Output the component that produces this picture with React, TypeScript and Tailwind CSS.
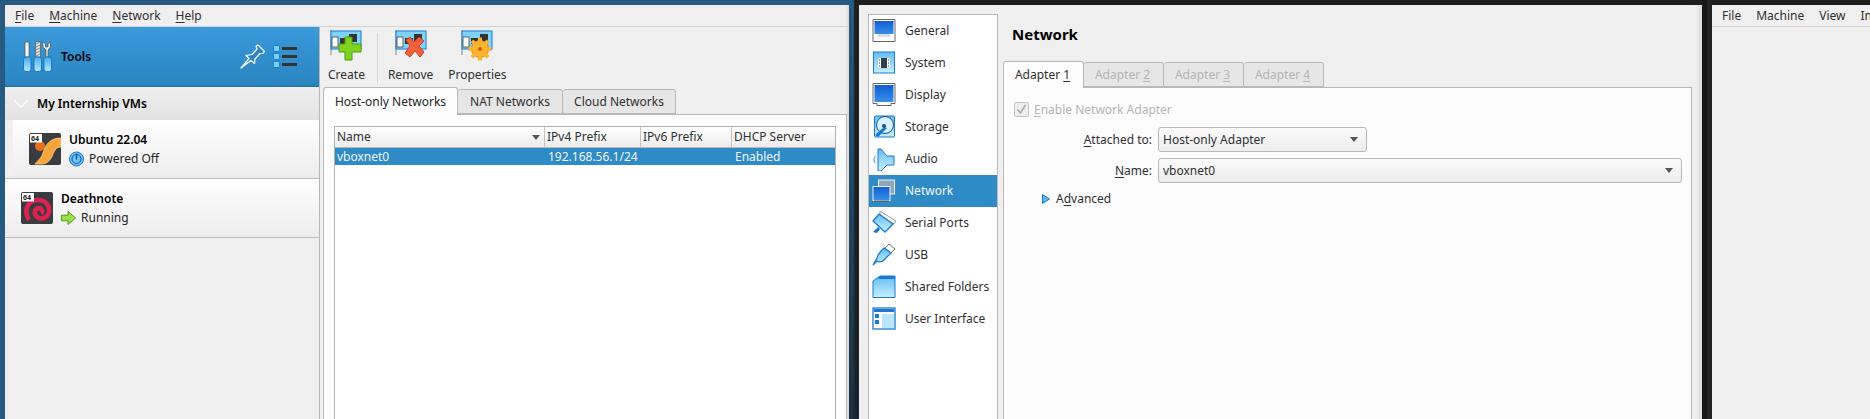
import React from "react";

const F = { fontFamily: '"Noto Sans", sans-serif' };

function Tools() {
  return (
    <svg width="29" height="31" viewBox="0 0 29 31">
      <defs>
        <linearGradient id="toolh" x1="0" y1="0" x2="0" y2="1"><stop offset="0" stopColor="#45aef0" /><stop offset="1" stopColor="#b8e8ff" /></linearGradient>
      </defs>
      <path d="M2 1h4v15H2z" fill="#f4f4f4" stroke="#555" strokeWidth=".7" />
      <path d="M12.500 .5h5V16h-5z" fill="#e4e4e4" stroke="#555" strokeWidth=".7" />
      <path d="M13 3l4-2M13 6l4-2M13 9l4-2M13 12l4-2M13 15l4-2" stroke="#666" strokeWidth=".8" />
      <path d="M23 16V9L20 6V.8L22.500 3v3h2.500V3L27.500 .8V6L25 9v7z" fill="#f4f4f4" stroke="#555" strokeWidth=".7" />
      <g stroke="#1878d0" strokeWidth="1" fill="url(#toolh)">
        <rect x=".5" y="16" width="7.500" height="14.500" rx="2.500" />
        <rect x="11" y="16" width="7.500" height="14.500" rx="2.500" />
        <rect x="21" y="16" width="7.500" height="14.500" rx="2.500" />
      </g>
    </svg>
  );
}

function Pin() {
  return (
    <svg width="25" height="25" viewBox="0 0 25 25" fill="none">
      <path d="M1 24 9 14.500 6 11.500 12 10.500 17 5 16 2.500 18 1 24.500 7.500 23 9.500 20 9.500 15 15 14.500 19.500 11 16.500z" fill="#2d87c4" stroke="#fff" strokeWidth="1.200" strokeLinejoin="round" />
    </svg>
  );
}

function ListDetails() {
  return (
    <svg width="25" height="24" viewBox="0 0 25 24">
      {[1, 9, 17].map((y) => (
        <g key={y}>
          <rect x=".5" y={y - .5} width="6" height="6" rx="1" fill="#7bd0ff" stroke="#1b78cf" />
          <rect x="9" y={y + 1} width="15" height="3" fill="#333" />
        </g>
      ))}
    </svg>
  );
}

function Ubuntu() {
  return (
    <svg width="32" height="32" viewBox="0 0 32 32">
      <rect width="32" height="32" rx="2" fill="#3a3c41" />
      <circle cx="11" cy="13" r="5" fill="#e9701b" />
      <path d="M32 5v9c-5 0-6 3-8 7-2 6-6 10-11 10H6c3-4 6-5 8-11 2-7 6-15 18-15z" fill="#f6a53a" stroke="#fdd28a" strokeWidth=".8" />
      <rect x="1" y="1" width="12" height="8.500" fill="#fff" />
      <text x="2" y="8" fontSize="7" fontWeight="700" fill="#222" style={F}>64</text>
    </svg>
  );
}

function Debian() {
  return (
    <svg width="32" height="32" viewBox="0 0 32 32" fill="none">
      <rect width="32" height="32" rx="2" fill="#3a3c41" />
      <path d="M8 28C2 18 7 8 17 8c8 0 12 6 11 12-1 6-8 8-12 5-4-3-2-9 2-9 3 0 4 4 2 5" stroke="#e0204f" strokeWidth="4.500" />
      <rect x="1" y="1" width="12" height="8.500" fill="#fff" />
      <text x="2" y="8" fontSize="7" fontWeight="700" fill="#222" style={F}>64</text>
    </svg>
  );
}

function PowerOff() {
  return (
    <svg width="15" height="16" viewBox="0 0 15 16" fill="none">
      <circle cx="7.500" cy="8" r="7" fill="#6cc1f5" stroke="#1b78cf" />
      <circle cx="7.500" cy="8" r="4.500" stroke="#14589e" strokeWidth="1" />
      <path d="M7.500 2.500v6" stroke="#14589e" strokeWidth="1.300" />
    </svg>
  );
}

function RunArrow() {
  return (
    <svg width="15" height="16" viewBox="0 0 16 16">
      <path d="M.5 5h7V1l8 7-8 7v-4h-7z" fill="#9ae042" stroke="#4c9a18" />
    </svg>
  );
}

function NetCard({ children }: { children: React.ReactNode }) {
  return (
    <svg width="32" height="32" viewBox="0 0 32 32">
      <path d="M1 1v25" stroke="#888" strokeWidth="1" />
      <rect x="1" y="2" width="30" height="18" fill="#7fd3fb" stroke="#1b78cf" strokeWidth="1" />
      <rect x="2" y="8" width="6" height="10" fill="#fff" stroke="#444" strokeWidth=".8" />
      <rect x="10" y="9" width="8" height="6" fill="#333" />
      <rect x="19" y="5" width="8" height="8" fill="#333" />
      {children}
    </svg>
  );
}

const Plus = () => (
  <path d="M15 9h7v7h9v8h-9v8h-7v-8H9v-8h6z" fill="#7ed321" stroke="#4f9c10" strokeWidth="1" transform="translate(0 -1)" />
);
const Cross = () => (
  <path d="M11 11l4-3 4 5 5-5 5 4-5 5 5 6-4 5-5-6-5 6-5-4 5-7z" fill="#f4603c" stroke="#c8401f" strokeWidth="1" />
);
const Gear = () => (
  <g transform="translate(19 20)">
    <circle r="8.500" fill="#fbb42e" stroke="#e2801a" strokeWidth="1" />
    {[0, 45, 90, 135, 180, 225, 270, 315].map((a) => (
      <rect key={a} x="-2" y="-11.500" width="4" height="4" fill="#fbb42e" transform={`rotate(${a})`} />
    ))}
    <circle r="2" fill="#d9541e" />
  </g>
);

function SIcon({ name }: { name: string }) {
  const s = { width: 24, height: 24, viewBox: "0 0 24 24" };
  const id = name.replace(/ /g, "");
  const grad = (
    <defs>
      <linearGradient id={`g${id}`} x1="0" y1="0" x2="0" y2="1"><stop offset="0" stopColor="#63bdf5" /><stop offset="1" stopColor="#c9efff" /></linearGradient>
      <linearGradient id={`b${id}`} x1="0" y1="0" x2="0" y2="1"><stop offset="0" stopColor="#0f5fd0" /><stop offset="1" stopColor="#3a8ee8" /></linearGradient>
    </defs>
  );
  if (name === "General")
    return <svg {...s}>{grad}<path d="M1 .5h22v22H1z" fill="#fff" stroke="#666" /><rect x="2.500" y="2" width="19" height="13" fill={`url(#b${id})`} /><path d="M5.500 15h13v3h-13z" fill="#ddd" /></svg>;
  if (name === "System")
    return <svg {...s}>{grad}<rect x="1.500" y="1" width="21" height="21" fill={`url(#g${id})`} stroke="#1b78cf" /><rect x="6" y="7" width="12" height="10" fill="#fff" stroke="#bbb" strokeWidth=".5" /><rect x="9" y="7" width="6" height="10" fill="#2b3f57" /><path d="M7 9h1M7 12h1M7 15h1M16 9h1M16 12h1M16 15h1" stroke="#2b3f57" /></svg>;
  if (name === "Display")
    return <svg {...s}>{grad}<path d="M1 .5h22v20h-4v2H5v-2H1z" fill="#fff" stroke="#666" /><rect x="2.500" y="2" width="19" height="17" fill={`url(#b${id})`} /></svg>;
  if (name === "Storage")
    return <svg {...s}>{grad}<rect x="2.500" y="1" width="20" height="21" rx="1" fill={`url(#g${id})`} stroke="#1b78cf" /><circle cx="13" cy="10" r="8.500" fill="#d9f2ff" stroke="#184f84" /><circle cx="12" cy="11" r="2" fill="#184f84" /><path d="M3 20l9-8 3 1-9 9z" fill="#1b78cf" /></svg>;
  if (name === "Audio")
    return <svg {...s}>{grad}<path d="M6 8V2h3l6 7h7v9h-7l-6 6H6z" fill={`url(#g${id})`} stroke="#1b78cf" /><path d="M3.500 9c-2 2-2 5 0 7" fill="none" stroke="#1b78cf" /></svg>;
  if (name === "Network")
    return <svg {...s}>{grad}<rect x="6.500" y="1" width="16" height="14" fill="#8fa6b8" stroke="#e8eef2" /><rect x="1" y="7.500" width="17" height="14" fill={`url(#b${id})`} stroke="#e8eef2" /><path d="M2 21.500h15v1H2z" fill="#555" /></svg>;
  if (name === "Serial Ports")
    return <svg {...s}>{grad}<path d="M8 0l16 10-2 3-14-8z" fill="#fff" stroke="#999" /><path d="M7 3L21 13l-8 8L1 10z" fill={`url(#g${id})`} stroke="#1b78cf" strokeWidth="1.300" /><path d="M1 21l5-5 2 2-3 4z" fill="#1b78cf" /></svg>;
  if (name === "USB")
    return <svg {...s}>{grad}<path d="M17 1l6 5-4 4-6-5z" fill="#fff" stroke="#777" /><path d="M12 5l7 5-7 7c-2 2-5 2-7 1l-4 4 4-7c0-3 4-7 7-10z" fill={`url(#g${id})`} stroke="#1b78cf" strokeWidth="1.200" /></svg>;
  if (name === "Shared Folders")
    return <svg {...s}>{grad}<path d="M1 22.500V6L8 1h15v21.500z" fill={`url(#g${id})`} stroke="#1b78cf" /><path d="M8 1h15v3H6z" fill="#1b78cf" /></svg>;
  return <svg {...s}>{grad}<rect x="1" y="1" width="22" height="21" fill="#fff" stroke="#1b78cf" strokeWidth="1.300" /><rect x="2" y="2" width="20" height="3" fill="#1b78cf" /><rect x="3" y="7" width="4" height="4" fill="#1b78cf" /><rect x="3" y="13" width="4" height="4" fill="#1b78cf" /><rect x="10" y="7" width="12" height="14" fill="#b9e6fb" /></svg>;
}

function U({ children }: { children: React.ReactNode }) {
  return <u className="underline underline-offset-[2px]">{children}</u>;
}

function Chevron() {
  return <svg width="8" height="5" viewBox="0 0 8 5"><path d="M0 0h8L4 5z" fill="#555" /></svg>;
}

function Tool({ label, icon }: { label: string; icon: React.ReactNode }) {
  return (
    <div className="flex flex-col items-center h-[57px] justify-between">
      <div className="mt-[1px] h-[32px]">{icon}</div>
      <span className="leading-[16px] mb-[2px]">{label}</span>
    </div>
  );
}

function VmRow({ name, status, icon, state, inset }: { name: string; status: string; icon: React.ReactNode; state: React.ReactNode; inset?: boolean }) {
  return (
    <div className="h-[59px] flex border-b border-[#bcbcbc] bg-[#efefef]">
      <div className={`flex-1 flex items-center gap-[8px] bg-gradient-to-b from-white to-[#ececec] ${inset ? "ml-[8px] pl-[16px]" : "pl-[16px]"}`}>
        {icon}
        <div className="flex flex-col">
          <span className="font-semibold leading-[18px] text-black">{name}</span>
          <span className="flex items-center gap-[5px] leading-[18px] mt-[1px]">{state}{status}</span>
        </div>
      </div>
    </div>
  );
}

function Window1() {
  return (
    <div className="w-[844px] mt-[5px] bg-[#efefef] flex flex-col shrink-0 shadow-[inset_-5px_0_5px_-5px_rgba(0,0,0,0.2)]">
      <div className="h-[22px] border-b border-[#d4d4d4] flex items-center gap-[15px] pl-[10px] leading-[20px] text-[#303030]">
        <span><U>F</U>ile</span><span><U>M</U>achine</span><span><U>N</U>etwork</span><span><U>H</U>elp</span>
      </div>
      <div className="flex flex-1 min-h-0">
        <div className="w-[315px] border-r border-[#b8b8b8] flex flex-col">
          <div className="h-[60px] bg-gradient-to-b from-[#3a9adb] to-[#2a84c0] border-b border-[#1f6f9f] flex items-center pl-[18px] pr-[21px] text-black">
            <Tools />
            <span className="ml-[9px] font-semibold">Tools</span>
            <div className="ml-auto flex items-center gap-[8px]"><Pin /><ListDetails /></div>
          </div>
          <div className="h-[33px] bg-gradient-to-b from-[#efefef] to-[#e2e2e2] flex items-center pl-[9px] gap-[9px] font-semibold text-black">
            <svg width="14" height="8" viewBox="0 0 14 8" fill="none"><path d="M.5.5 7 7 13.500.5" stroke="#fff" strokeWidth="1.300" /></svg>
            <span>My Internship VMs</span>
          </div>
          <VmRow inset name="Ubuntu 22.04" status="Powered Off" icon={<Ubuntu />} state={<PowerOff />} />
          <VmRow name="Deathnote" status="Running" icon={<Debian />} state={<RunArrow />} />
        </div>
        <div className="flex-1 min-w-0 flex flex-col pl-[3px] pr-[2px]">
          <div className="h-[60px] flex pl-[5px] items-start pt-[1px] shrink-0 text-[#303030]">
            <Tool label="Create" icon={<NetCard><Plus /></NetCard>} />
            <div className="w-px h-[50px] bg-[#d4d4d4] mt-[5px] ml-[12px] mr-[10px]" />
            <Tool label="Remove" icon={<NetCard><Cross /></NetCard>} />
            <div className="ml-[15px]"><Tool label="Properties" icon={<NetCard><Gear /></NetCard>} /></div>
          </div>
          <div className="flex items-end h-[27px] shrink-0 relative z-10">
            <div className="w-[135px] h-[28px] border border-[#b8b8b8] border-b-0 rounded-t-[3px] bg-[#fcfcfc] flex items-center justify-center -mb-px">Host-only Networks</div>
            <div className="w-[105px] h-[25px] border border-l-0 border-[#b8b8b8] rounded-t-[3px] bg-[#e6e6e6] flex items-center justify-center text-[#303030]">NAT Networks</div>
            <div className="w-[113px] h-[25px] border border-l-0 border-[#b8b8b8] rounded-t-[3px] bg-[#e6e6e6] flex items-center justify-center text-[#303030]">Cloud Networks</div>
          </div>
          <div className="flex-1 border border-b-0 border-[#b8b8b8] bg-[#fcfcfc] pt-[11px] px-[10px] min-h-0">
            <div className="h-full border border-b-0 border-[#b0b0b0] bg-white flex flex-col">
              <div className="h-[21px] grid grid-cols-[210px_96px_91px_1fr] border-b border-[#b8b8b8] bg-gradient-to-b from-white to-[#ececec] text-[#303030]">
                <div className="border-r border-[#c4c4c4] pl-[2px] pr-[4px] flex items-center justify-between"><span>Name</span><Chevron /></div>
                <div className="border-r border-[#c4c4c4] pl-[2px] flex items-center">IPv4 Prefix</div>
                <div className="border-r border-[#c4c4c4] pl-[2px] flex items-center">IPv6 Prefix</div>
                <div className="pl-[2px] flex items-center">DHCP Server</div>
              </div>
              <div className="h-[17px] grid grid-cols-[210px_96px_91px_1fr] bg-[#2e8bc6] text-[#f2f6f9] leading-[17px]">
                <span className="pl-[2px]">vboxnet0</span><span className="pl-[3px]">192.168.56.1/24</span><span /><span className="pl-[3px]">Enabled</span>
              </div>
            </div>
          </div>
        </div>
      </div>
    </div>
  );
}

const sections = ["General", "System", "Display", "Storage", "Audio", "Network", "Serial Ports", "USB", "Shared Folders", "User Interface"];

function Combo({ w, text }: { w: string; text: string }) {
  return (
    <div className={`${w} h-[25px] border border-[#b8b8b8] rounded-[3px] bg-gradient-to-b from-[#fbfbfb] to-[#ececec] flex items-center justify-between pl-[4px] pr-[8px]`}>
      <span>{text}</span><Chevron />
    </div>
  );
}

function Window2() {
  return (
    <div className="w-[843px] mt-[5px] bg-[#efefef] flex pl-[9px] pr-[10px] pt-[9px] shrink-0 shadow-[inset_-7px_0_6px_-6px_rgba(0,0,0,0.15)]">
      <div className="w-[130px] border border-b-0 border-[#b8b8b8] bg-white flex flex-col">
        {sections.map((s) => (
          <div key={s} className={`h-[32px] flex items-center gap-[9px] pl-[3px] ${s === "Network" ? "bg-[#2e8bc6] text-[#f2f6f9]" : "text-[#303030]"}`}>
            <span className="w-[24px] h-[24px] shrink-0"><SIcon name={s} /></span>
            <span>{s}</span>
          </div>
        ))}
      </div>
      <div className="flex-1 ml-[5px] min-w-0 flex flex-col">
        <div className="h-[46px] flex items-center pl-[9px] pb-[6px] text-[15px] font-bold text-black">Network</div>
        <div className="flex items-end h-[27px] relative z-10">
          <div className="w-[81px] h-[27px] -mb-px pr-[2px] border border-b-0 border-[#b8b8b8] rounded-t-[3px] bg-[#fcfcfc] flex items-center justify-center text-[#303030]"><span>Adapter <U>1</U></span></div>
          {["2", "3", "4"].map((n) => (
            <div key={n} className="w-[80px] h-[25px] pr-[2px] border border-l-0 border-[#b8b8b8] rounded-t-[3px] bg-[#e6e6e6] flex items-center justify-center text-[#b5b5b5]"><span>Adapter <U>{n}</U></span></div>
          ))}
        </div>
        <div className="flex-1 border border-b-0 border-[#b8b8b8] bg-[#fcfcfc] pt-[14px] pl-[10px] text-[#303030]">
          <div className="flex items-center gap-[5px] h-[15px] text-[#b5b5b5]">
            <span className="w-[15px] h-[15px] border border-[#c4c4c4] bg-[#eeeeee] rounded-[2px] flex items-center justify-center">
              <svg width="11" height="11" viewBox="0 0 11 11" fill="none"><path d="M1.500 5.500 4.500 9 9.500 1" stroke="#aaa" strokeWidth="1.600" /></svg>
            </span>
            <span><U>E</U>nable Network Adapter</span>
          </div>
          <div className="mt-[10px] grid grid-cols-[138px_1fr] gap-x-[6px] gap-y-[6px] items-center pr-[9px]">
            <span className="text-right"><U>A</U>ttached to:</span>
            <Combo w="w-[209px]" text="Host-only Adapter" />
            <span className="text-right"><U>N</U>ame:</span>
            <Combo w="w-full" text="vboxnet0" />
          </div>
          <div className="mt-[7px] ml-[28px] flex items-center gap-[6px] h-[18px]">
            <svg width="8" height="10" viewBox="0 0 8 10"><path d="M.5.5 7.500 5 .5 9.500z" fill="#5cb8f5" stroke="#1b78cf" /></svg>
            <span>A<U>d</U>vanced</span>
          </div>
        </div>
      </div>
    </div>
  );
}

function Window3() {
  return (
    <div className="flex-1 min-w-0 mt-[5px] bg-[#efefef]">
      <div className="h-[22px] border-b border-[#d4d4d4] flex items-center gap-[15px] pl-[10px] text-[#303030] overflow-hidden whitespace-nowrap">
        <span>File</span><span>Machine</span><span>View</span><span>Input</span>
      </div>
    </div>
  );
}

export default function App() {
  return (
    <div style={F} className="w-[1870px] h-[419px] overflow-hidden flex text-[12px] bg-[#1f1f1f] text-[#232627]">
      <div className="bg-[#265a80] flex shrink-0">
        <div className="w-[5px]" />
        <Window1 />
        <div className="w-[5px] bg-gradient-to-b from-[#265a80] to-[#1b3040]" />
      </div>
      <div className="w-[5px] shrink-0 bg-gradient-to-b from-[#1f1f1f] to-[#1a252d]" />
      <Window2 />
      <div className="w-[10px] shrink-0 flex"><div className="w-[5px] bg-[#181818]" /><div className="w-[5px] bg-[#222]" /></div>
      <Window3 />
    </div>
  );
}
